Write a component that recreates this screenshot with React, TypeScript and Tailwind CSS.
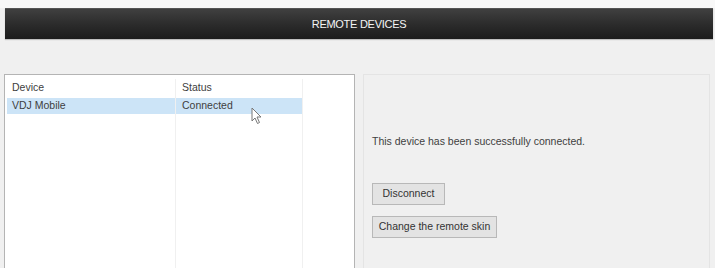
import React from 'react';

function Cursor() {
    return (
        <svg className="absolute left-[251px] top-[107px]" width="12" height="18" viewBox="0 0 12 18">
            <path d="M1 1 L1 14 L4 11 L6.5 16.5 L8.5 15.5 L6 10 L10 10 Z" fill="#fff" stroke="#777" strokeWidth="1" strokeLinejoin="round" />
        </svg>
    );
}

export default function App() {
    return (
        <div className="relative h-[268px] w-[715px] overflow-hidden bg-[#f0f0f0] text-[10.5px] text-[#404040]" style={{ fontFamily: '"Liberation Sans", Arial, sans-serif' }}>
            {/* top strip */}
            <div className="h-[8px] bg-[#f8f8f8]" />

            {/* title bar */}
            <div className="ml-[5px] flex h-[31px] w-[708px] items-center justify-center border-t border-[#555] bg-gradient-to-b from-[#404040] via-[#2c2c2c] to-[#1c1c1c] shadow-[0_1px_1px_rgba(0,0,0,0.2)]">
                <span className="text-[11px] tracking-tight text-[#f4f4f4]">REMOTE DEVICES</span>
            </div>

            <div className="h-[35px]" />

            <div className="flex gap-[8px] pl-[4px]">
                {/* device list */}
                <div className="relative h-[200px] w-[351px] border border-[#b4b4b4] bg-white">
                    <div className="flex h-full pl-[2px] pt-[4px]">
                        <div className="w-[169px] border-r border-[#f0f0f0]">
                            <div className="flex h-[18px] items-center pl-[5px]">Device</div>
                            <div className="mt-[1px] flex h-[16px] items-center bg-[#cce4f7] pl-[5px]">VDJ Mobile</div>
                        </div>
                        <div className="w-[127px] border-r border-[#f0f0f0]">
                            <div className="flex h-[18px] items-center pl-[6px]">Status</div>
                            <div className="mt-[1px] flex h-[16px] items-center bg-[#cce4f7] pl-[6px]">Connected</div>
                        </div>
                        <div className="flex-1" />
                    </div>
                </div>

                {/* details panel */}
                <div className="flex h-[200px] w-[347px] flex-col border border-[#e4e4e4] bg-[#f0f0f0] pl-[8px]">
                    <p className="mt-[59px]">This device has been successfully connected.</p>
                    <button className="mt-[33px] h-[22px] w-[73px] border border-[#b8b8b8] bg-[#e3e3e3] text-[10.5px] text-[#333]">
                        Disconnect
                    </button>
                    <button className="mt-[11px] h-[22px] w-[125px] border border-[#b8b8b8] bg-[#e3e3e3] text-[10.5px] text-[#333]">
                        Change the remote skin
                    </button>
                </div>
            </div>

            <Cursor />
        </div>
    );
}
